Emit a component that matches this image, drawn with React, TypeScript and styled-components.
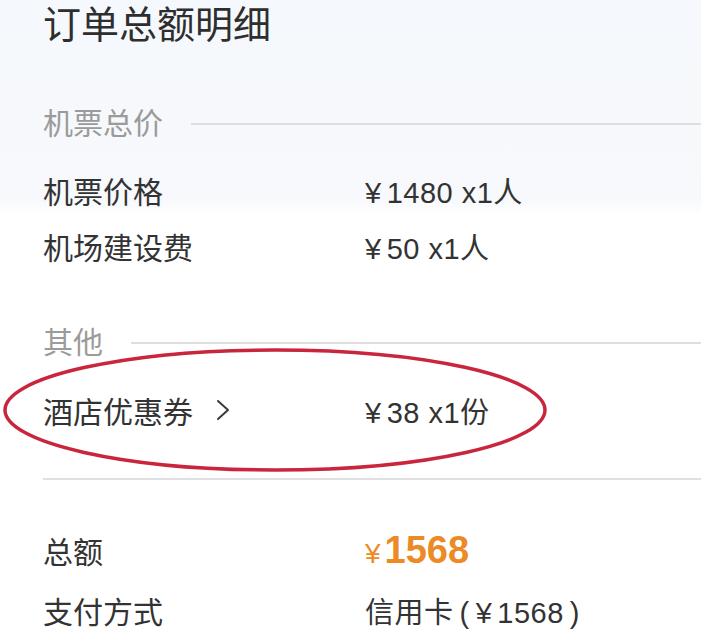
import styled, { createGlobalStyle } from 'styled-components';

const GlobalStyle = createGlobalStyle`
  html, body {
    margin: 0;
    padding: 0;
    background: #ffffff;
  }
  body {
    font-family: 'Liberation Sans', 'Noto Sans CJK SC', sans-serif;
    color: #333333;
  }
`;

const Page = styled.main`
  position: relative;
  width: 701px;
  height: 640px;
  overflow: hidden;
  box-sizing: border-box;
  padding-left: 43px;
  display: flex;
  flex-direction: column;
  background: linear-gradient(
    to bottom,
    #f5f8fc 0,
    #f7f9fc 200px,
    #ffffff 214px
  );
`;

const Title = styled.h1`
  margin: 0;
  height: 44px;
  line-height: 44px;
  font-size: 38px;
  font-weight: 400;
  color: #2e2e2e;
  font-family: 'Noto Sans CJK SC', sans-serif;
`;

const SectionHeader = styled.div<{ $gap: number }>`
  display: flex;
  align-items: center;
  height: 40px;
  margin-top: ${(p) => p.$gap}px;
`;

const SectionLabel = styled.span`
  font-family: 'Noto Sans CJK SC', sans-serif;
  font-size: 30px;
  color: #9b9b9b;
  margin-right: 28px;
`;

const Rule = styled.div`
  flex: 1;
  height: 2px;
  background: #dedede;
  margin-top: 6px;
`;

const Divider = styled.div`
  height: 2px;
  background: #e0e0e0;
  margin-top: 40px;
`;

const Row = styled.div<{ $h?: number; $gap?: number }>`
  display: flex;
  align-items: center;
  height: ${(p) => p.$h ?? 56}px;
  margin-top: ${(p) => p.$gap ?? 0}px;
`;

const Label = styled.div`
  width: 322px;
  display: flex;
  align-items: center;
  font-family: 'Noto Sans CJK SC', sans-serif;
  font-size: 30px;
  color: #333333;
`;

const Value = styled.div`
  font-size: 29px;
  letter-spacing: 0.5px;
  color: #333333;
  font-family: 'Liberation Sans', 'Noto Sans CJK SC', sans-serif;
`;

const Cur = styled.span`
  margin-right: 5px;
`;

const Paren = styled.span`
  margin: 0 6px;
`;

const Total = styled.div`
  font-size: 38px;
  font-weight: 700;
  color: #ec8a25;
  font-family: 'Liberation Sans', sans-serif;
`;

const Yen = styled.span`
  font-size: 28px;
  font-weight: 400;
  margin-right: 4px;
`;

const Chevron = styled.svg`
  margin-left: 23px;
  width: 14px;
  height: 22px;
`;

const Highlight = styled.svg`
  position: absolute;
  left: 0;
  top: 0;
  width: 701px;
  height: 640px;
  pointer-events: none;
`;

export default function App() {
  return (
    <>
      <GlobalStyle />
      <Page>
        <Title>订单总额明细</Title>

        <SectionHeader $gap={57}>
          <SectionLabel>机票总价</SectionLabel>
          <Rule />
        </SectionHeader>
        <Row $gap={21}>
          <Label>机票价格</Label>
          <Value>
            <Cur>¥</Cur>1480 x1人
          </Value>
        </Row>
        <Row>
          <Label>机场建设费</Label>
          <Value>
            <Cur>¥</Cur>50 x1人
          </Value>
        </Row>

        <SectionHeader $gap={46}>
          <SectionLabel>其他</SectionLabel>
          <Rule />
        </SectionHeader>
        <Row $gap={22}>
          <Label>
            酒店优惠券
            <Chevron viewBox="0 0 14 22">
              <polyline
                points="2,2 12,11 2,20"
                fill="none"
                stroke="#3a3a3a"
                strokeWidth="2"
                strokeLinecap="round"
                strokeLinejoin="round"
              />
            </Chevron>
          </Label>
          <Value>
            <Cur>¥</Cur>38 x1份
          </Value>
        </Row>

        <Divider />

        <Row $h={60} $gap={40}>
          <Label>总额</Label>
          <Total>
            <Yen>¥</Yen>1568
          </Total>
        </Row>
        <Row $h={60}>
          <Label>支付方式</Label>
          <Value>
            信用卡<Paren>(</Paren>
            <Cur>¥</Cur>1568<Paren>)</Paren>
          </Value>
        </Row>

        <Highlight viewBox="0 0 701 640">
          <ellipse
            cx="275"
            cy="410"
            rx="270"
            ry="60"
            fill="none"
            stroke="#c9263d"
            strokeWidth="3.5"
          />
        </Highlight>
      </Page>
    </>
  );
}
